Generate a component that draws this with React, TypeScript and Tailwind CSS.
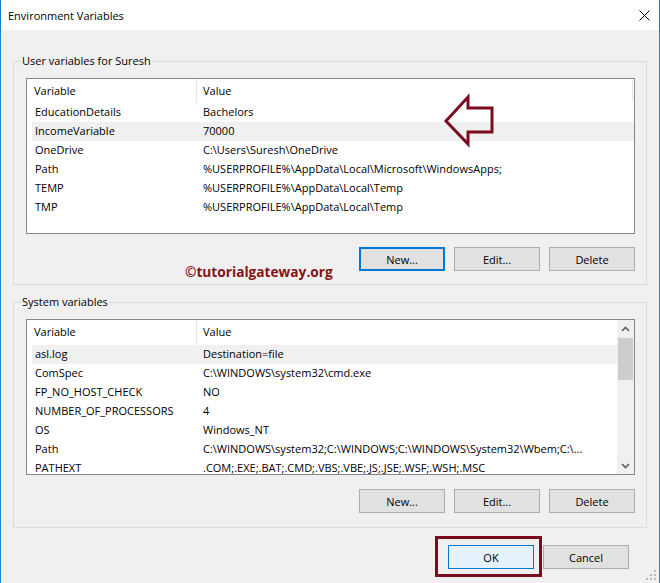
import React from "react";

const userRows: [string, string][] = [
  ["EducationDetails", "Bachelors"],
  ["IncomeVariable", "70000"],
  ["OneDrive", "C:\\Users\\Suresh\\OneDrive"],
  ["Path", "%USERPROFILE%\\AppData\\Local\\Microsoft\\WindowsApps;"],
  ["TEMP", "%USERPROFILE%\\AppData\\Local\\Temp"],
  ["TMP", "%USERPROFILE%\\AppData\\Local\\Temp"],
];

const sysRows: [string, string][] = [
  ["asl.log", "Destination=file"],
  ["ComSpec", "C:\\WINDOWS\\system32\\cmd.exe"],
  ["FP_NO_HOST_CHECK", "NO"],
  ["NUMBER_OF_PROCESSORS", "4"],
  ["OS", "Windows_NT"],
  ["Path", "C:\\WINDOWS\\system32;C:\\WINDOWS;C:\\WINDOWS\\System32\\Wbem;C:\\..."],
  ["PATHEXT", ".COM;.EXE;.BAT;.CMD;.VBS;.VBE;.JS;.JSE;.WSF;.WSH;.MSC"],
];

function Header({ endLine, tall }: { endLine?: boolean; tall?: boolean }) {
  return (
    <div className={(tall ? "h-[25px]" : "h-[24px]") + " flex items-center shrink-0"}>
      <div className="w-[170px] h-full flex items-center pl-[7px] border-r border-[#e5e5e5]">Variable</div>
      <div className="flex-1 h-full flex items-center pl-[6px]">Value</div>
      {endLine ? <div className="w-px h-[22px] bg-[#e5e5e5] mr-[1px]" /> : null}
    </div>
  );
}

function Rows({ rows, selected }: { rows: [string, string][]; selected: number }) {
  return (
    <div className="flex flex-col">
      {rows.map(([k, v], i) => (
        <div
          key={k + i}
          className={
            "h-[19px] ml-[5px] flex items-center whitespace-nowrap shrink-0 " +
            (i === selected ? "bg-[#f0f0f0]" : "")
          }
        >
          <div className="w-[168px] pl-[3px] overflow-hidden">{k}</div>
          <div className="flex-1 pl-[3px] overflow-hidden">{v}</div>
        </div>
      ))}
    </div>
  );
}

function Btn({ label, variant }: { label: string; variant?: "focus" | "default" }) {
  let cls = "bg-[#e1e1e1] border border-[#adadad]";
  if (variant === "focus") cls = "bg-[#e1e1e1] border-2 border-[#0078d7]";
  if (variant === "default") cls = "bg-[#e5f1fb] border border-[#0078d7]";
  return (
    <div className={"w-[86px] h-[24px] flex items-center justify-center leading-[15px] " + cls}>{label}</div>
  );
}

function GroupBox({
  label,
  className,
  children,
}: {
  label: string;
  className?: string;
  children: React.ReactNode;
}) {
  return (
    <div className={"relative border border-[#dcdcdc] pt-[16px] pl-[12px] pr-[11px] " + (className || "")}>
      <span className="absolute -top-[9px] left-[7px] px-[1px] bg-[#f0f0f0] leading-[15px]">{label}</span>
      {children}
    </div>
  );
}

function Chevron({ up }: { up?: boolean }) {
  return (
    <svg width="9" height="6" viewBox="0 0 9 6">
      <path
        d={up ? "M1 5L4.5 1.5L8 5" : "M1 1L4.5 4.5L8 1"}
        fill="none"
        stroke="#606060"
        strokeWidth="1.6"
      />
    </svg>
  );
}

export default function App() {
  return (
    <div className="w-[660px] h-[583px] bg-[#f0f0f0] border-x border-[#1883d7] flex flex-col relative overflow-hidden font-['Open_Sans',sans-serif] text-[11px] text-black">
      <div className="h-[30px] bg-white flex items-center justify-between pl-[7px] pr-[9px] shrink-0">
        <span className="leading-[15px]">Environment Variables</span>
        <svg width="11" height="11" viewBox="0 0 11 11">
          <path d="M0.5 0.5L10.5 10.5M10.5 0.5L0.5 10.5" stroke="#000" strokeWidth="1" />
        </svg>
      </div>

      <div className="px-[12px] flex flex-col">
        <GroupBox label="User variables for Suresh" className="mt-[31px] pb-[13px]">
          <div className="h-[156px] border border-[#828790] bg-white overflow-hidden flex flex-col">
            <Header endLine />
            <Rows rows={userRows} selected={1} />
          </div>
          <div className="mt-[13px] flex justify-end gap-[9px]">
            <Btn label="New..." variant="focus" />
            <Btn label="Edit..." />
            <Btn label="Delete" />
          </div>
          <span className="absolute top-[200px] left-[171px] text-[13.7px] leading-[19px] font-bold text-[#841517] whitespace-nowrap">
            ©tutorialgateway.org
          </span>
          <svg className="absolute top-[30px] left-[426px]" width="58" height="58" viewBox="0 0 58 58">
            <polygon
              points="6,29 28,5 28,16 52,16 52,40 28,40 28,52"
              fill="none"
              stroke="#7b0b1d"
              strokeWidth="3"
            />
          </svg>
        </GroupBox>

        <GroupBox label="System variables" className="mt-[17px] pb-[14px]">
          <div className="h-[156px] border border-[#828790] bg-white overflow-hidden flex">
            <div className="flex-1 flex flex-col overflow-hidden">
              <Header tall />
              <Rows rows={sysRows} selected={0} />
            </div>
            <div className="w-[17px] bg-[#f0f0f0] flex flex-col items-center">
              <div className="h-[17px] w-full flex items-center justify-center">
                <Chevron up />
              </div>
              <div className="w-[15px] h-[42px] bg-[#cdcdcd] mt-[1px]" />
              <div className="flex-1" />
              <div className="h-[17px] w-full flex items-center justify-center">
                <Chevron />
              </div>
            </div>
          </div>
          <div className="mt-[14px] flex justify-end gap-[9px]">
            <Btn label="New..." />
            <Btn label="Edit..." />
            <Btn label="Delete" />
          </div>
        </GroupBox>

        <div className="mt-[17px] flex justify-end gap-[9px] pr-[18px]">
          <div className="relative">
            <Btn label="OK" variant="default" />
            <div className="absolute -left-[13px] -right-[8px] -top-[9px] -bottom-[8px] border-[3px] border-[#7b0b1d]" />
          </div>
          <Btn label="Cancel" />
        </div>
      </div>

      <svg className="absolute bottom-[2px] right-[2px]" width="12" height="12" viewBox="0 0 12 12">
        <rect x="9" y="1" width="2" height="2" fill="#bcbcbc" />
        <rect x="5" y="5" width="2" height="2" fill="#bcbcbc" />
        <rect x="9" y="5" width="2" height="2" fill="#bcbcbc" />
        <rect x="1" y="9" width="2" height="2" fill="#bcbcbc" />
        <rect x="5" y="9" width="2" height="2" fill="#bcbcbc" />
        <rect x="9" y="9" width="2" height="2" fill="#bcbcbc" />
      </svg>
    </div>
  );
}
